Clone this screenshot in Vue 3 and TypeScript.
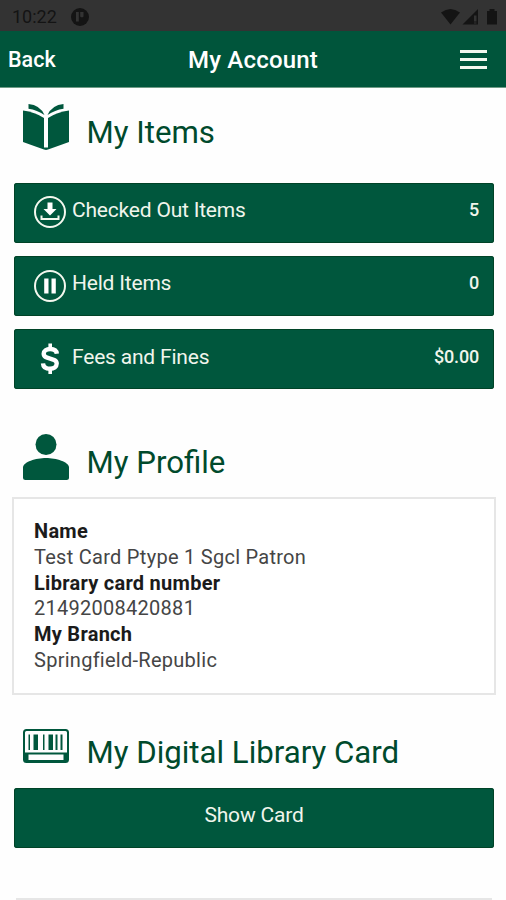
<script setup lang="ts">
interface AccountRow {
  label: string
  value: string
  icon: 'download' | 'pause' | 'dollar'
}

interface ProfileField {
  label: string
  value: string
}

const rows: AccountRow[] = [
  { label: 'Checked Out Items', value: '5', icon: 'download' },
  { label: 'Held Items', value: '0', icon: 'pause' },
  { label: 'Fees and Fines', value: '$0.00', icon: 'dollar' },
]

const profile: ProfileField[] = [
  { label: 'Name', value: 'Test Card Ptype 1 Sgcl Patron' },
  { label: 'Library card number', value: '21492008420881' },
  { label: 'My Branch', value: 'Springfield-Republic' },
]
</script>

<template>
  <div class="screen">
    <div class="status">
      <span class="clock">10:22</span>
      <svg class="status-app" viewBox="0 0 18 18" width="18" height="18">
        <circle cx="9" cy="9" r="9" fill="#141414" />
        <path d="M5 4h2.800v9.500H5zM9.200 4H12.500v4.500a2 2 0 0 1-3.300 0z" fill="#333" />
      </svg>
      <svg class="status-icons" viewBox="0 0 58 18" width="58" height="18">
        <g fill="#141414">
          <path d="M0 4.500Q9.500-2.500 19 4.500L9.500 16.500z" />
          <path d="M21.500 16.500L37 1V16.500z" />
          <path d="M46 3h2.500V1h5V3H56V16.500H46z" />
        </g>
        <path d="M33 7.500h2.500v6H33zM33 14.500h2.500v1H33z" fill="#333" />
      </svg>
    </div>

    <header class="navbar">
      <a class="back">Back</a>
      <h1 class="title">My Account</h1>
      <button class="menu" aria-label="Menu">
        <span></span><span></span><span></span>
      </button>
    </header>

    <main class="content">
      <section class="items">
        <div class="heading">
          <svg class="heading-icon" viewBox="0 0 48 48" width="48" height="48">
            <g fill="#00573d">
              <path d="M1 7.500Q13 9 22 15V46.500Q12 43 1 39z" />
              <path d="M47 7.500Q35 9 26 15V46.500Q36 43 47 39z" />
              <path d="M22 44.500h4v2l-2 .5-2-.5z" />
              <path d="M6.500 1Q18 2 22.500 12Q15 7 6.500 5.800z" />
              <path d="M41.500 1Q30 2 25.500 12Q33 7 41.500 5.800z" />
            </g>
          </svg>
          <h2>My Items</h2>
        </div>
        <div class="rows">
          <button v-for="row in rows" :key="row.label" class="bar row">
            <svg class="row-icon" viewBox="0 0 34 34" width="34" height="34">
              <template v-if="row.icon === 'download'">
                <circle cx="17" cy="17" r="15" fill="none" stroke="#f4f8ef" stroke-width="2" />
                <path d="M14.500 7.500h5v6.500h4L17 20.500 10.500 14h4z" fill="#fff" />
                <path d="M8.500 20.500v3.500h17v-3.500" fill="none" stroke="#f4f8ef" stroke-width="2" />
              </template>
              <template v-else-if="row.icon === 'pause'">
                <circle cx="17" cy="17" r="15" fill="none" stroke="#f4f8ef" stroke-width="2" />
                <path d="M11.200 9.500h4.300v15h-4.300zM18.500 9.500h4.300v15h-4.300z" fill="#fff" />
              </template>
              <g v-else fill="none" stroke="#fff" stroke-width="4.400">
                <path d="M23.800 11.800C23.500 8.300 20.500 7 17.200 7C13.500 7 10.700 8.600 10.700 11.800C10.700 18.300 23.700 14.800 23.700 21.600C23.700 25 20.700 26.800 17.200 26.800C13 26.800 10.200 25 10 21.300" />
                <path d="M17.200 1.500V7M17.200 26.500V32" stroke-width="3.600" />
              </g>
            </svg>
            <span class="row-label">{{ row.label }}</span>
            <span class="row-value">{{ row.value }}</span>
          </button>
        </div>
      </section>

      <section class="profile">
        <div class="heading">
          <svg class="heading-icon" viewBox="0 0 48 48" width="48" height="48">
            <g fill="#00573d">
              <circle cx="24" cy="11.500" r="10.500" />
              <path d="M1 34.500C1 29 14 25 24 25S47 29 47 34.500V44.500Q47 47 44.500 47H3.500Q1 47 1 44.500z" />
            </g>
          </svg>
          <h2>My Profile</h2>
        </div>
        <dl class="card">
          <template v-for="field in profile" :key="field.label">
            <dt>{{ field.label }}</dt>
            <dd>{{ field.value }}</dd>
          </template>
        </dl>
      </section>

      <section class="digital">
        <div class="heading">
          <svg class="heading-icon" viewBox="0 0 48 36" width="48" height="36">
            <path
              fill="#00573d"
              fill-rule="evenodd"
              d="M4.500 1h39Q47 1 47 4.500V31.500Q47 35 43.500 35H4.500Q1 35 1 31.500V4.500Q1 1 4.500 1zM4.500 3Q3 3 3 4.500V24.500H45V4.500Q45 3 43.500 3zM6.500 26.500V32H41.500V26.500z"
            />
            <path
              fill="#00573d"
              d="M6.500 6.500H8V22H6.500zM11.500 6.500H16V22H11.500zM21 6.500H22.500V22H21zM26.500 6.500H31V22H26.500zM33.500 6.500H35.500V22H33.500zM38.500 6.500H40.500V22H38.500z"
            />
          </svg>
          <h2>My Digital Library Card</h2>
        </div>
        <button class="bar show-card">Show Card</button>
      </section>
      <hr class="divider" />
    </main>
  </div>
</template>

<style>
body {
  margin: 0;
  background: #fefefe;
}
</style>

<style scoped>
.screen {
  box-sizing: border-box;
  width: 100%;
  height: 900px;
  overflow: hidden;
  background: #fefefe;
  font-family: Roboto, "Liberation Sans", sans-serif;
}
h1, h2, dl, dd, button {
  margin: 0;
  padding: 0;
}
button {
  border: 0;
  font-family: inherit;
}
.status {
  box-sizing: border-box;
  display: flex;
  align-items: center;
  height: 31px;
  padding: 2px 7px 0 12px;
  background: #333;
}
.clock {
  width: 59px;
  color: #141414;
  font-size: 18px;
  line-height: 20px;
}
.status-icons {
  margin-left: auto;
}
.navbar {
  box-sizing: border-box;
  display: grid;
  grid-template-columns: 1fr auto 1fr;
  align-items: center;
  height: 57px;
  padding: 2px 19px 0 8px;
  background: #00553b;
  border-bottom: 1px solid #6f9b86;
  color: #fff;
}
.back {
  font-size: 21.500px;
  font-weight: 500;
  line-height: 30px;
}
.title {
  padding-left: 11px;
  font-size: 24px;
  font-weight: 500;
  line-height: 30px;
  letter-spacing: 0.200px;
}
.menu {
  display: flex;
  flex-direction: column;
  gap: 5px;
  justify-self: end;
  width: 27px;
  margin-top: -1px;
  background: none;
}
.menu span {
  height: 3px;
  background: #f4f8ef;
}
.content {
  padding: 0 10px 0 12px;
}
.heading {
  display: flex;
  align-items: flex-start;
  gap: 16.500px;
  padding-left: 10px;
}
.heading h2 {
  color: #004a2c;
  font-size: 31.200px;
  font-weight: 400;
  line-height: 36px;
  white-space: nowrap;
}
.items .heading {
  height: 79.600px;
  padding-top: 15px;
}
.items h2,
.profile h2 {
  margin-top: 12px;
}
.rows {
  display: grid;
  gap: 13.300px;
  margin: 0 2px;
}
.bar {
  box-sizing: border-box;
  height: 60px;
  border-radius: 3px;
  background: #00573d;
  color: #f0f5ec;
  font-size: 21px;
  line-height: 28px;
  letter-spacing: -0.200px;
  box-shadow: inset 0 0 0 1px #004327;
}
.row {
  display: flex;
  align-items: flex-start;
  padding: 13.600px 15px 0 19px;
}
.row-icon {
  margin: -0.800px 5px 0 0;
}
.row-value {
  margin-left: auto;
  font-size: 18px;
  font-weight: 500;
}
.profile .heading {
  height: 64px;
  padding-top: 43.800px;
}
.card {
  box-sizing: border-box;
  height: 198px;
  padding: 20px 20px 0;
  border: 2px solid #e6e6e6;
  background: #fff;
  font-size: 20px;
  line-height: 25.800px;
  letter-spacing: 0.270px;
}
.card dt {
  color: #1b1b1b;
  font-weight: 700;
}
.card dd {
  color: #454545;
}
.digital .heading {
  height: 60px;
  padding-top: 33px;
}
.digital h2 {
  margin-top: 7px;
}
.show-card {
  display: block;
  width: calc(100% - 4px);
  margin: 0 2px;
  padding: 0 0 5px;
}
.divider {
  height: 2px;
  margin: 50px 4px 0;
  border: 0;
  background: #e6e6e6;
}
</style>
